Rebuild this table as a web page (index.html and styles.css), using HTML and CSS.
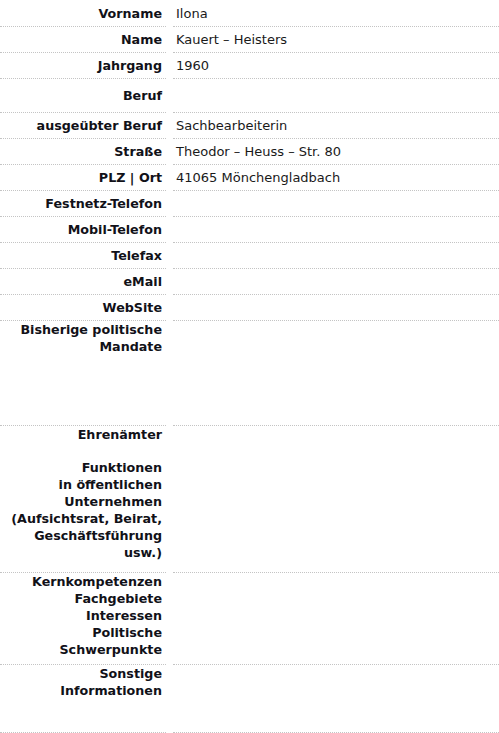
FILE: index.html
```html
<!DOCTYPE html>
<html lang="de">
<head>
<meta charset="utf-8">
<link rel="stylesheet" href="styles.css">
</head>
<body>
<div class="sheet">
  <div class="row r-first"><div class="lbl">Vorname</div><div class="val">Ilona</div></div>
  <div class="row"><div class="lbl">Name</div><div class="val">Kauert – Heisters</div></div>
  <div class="row"><div class="lbl">Jahrgang</div><div class="val">1960</div></div>
  <div class="row r-beruf"><div class="lbl">Beruf</div><div class="val"></div></div>
  <div class="row"><div class="lbl">ausgeübter Beruf</div><div class="val">Sachbearbeiterin</div></div>
  <div class="row"><div class="lbl">Straße</div><div class="val">Theodor – Heuss – Str. 80</div></div>
  <div class="row"><div class="lbl">PLZ | Ort</div><div class="val">41065 Mönchengladbach</div></div>
  <div class="row"><div class="lbl">Festnetz-Telefon</div><div class="val"></div></div>
  <div class="row"><div class="lbl">Mobil-Telefon</div><div class="val"></div></div>
  <div class="row"><div class="lbl">Telefax</div><div class="val"></div></div>
  <div class="row"><div class="lbl">eMail</div><div class="val"></div></div>
  <div class="row"><div class="lbl">WebSite</div><div class="val"></div></div>
  <div class="row tall r-mandate"><div class="lbl">Bisherige politische<br>Mandate</div><div class="val"></div></div>
  <div class="row tall r-ehren noline"><div class="lbl">Ehrenämter</div><div class="val"></div></div>
  <div class="row tall r-funk"><div class="lbl">Funktionen<br>in öffentlichen<br>Unternehmen<br>(Aufsichtsrat, Beirat,<br>Geschäftsführung<br>usw.)</div><div class="val"></div></div>
  <div class="row tall r-kern"><div class="lbl">Kernkompetenzen<br>Fachgebiete<br>Interessen<br>Politische<br>Schwerpunkte</div><div class="val"></div></div>
  <div class="row tall r-sonst"><div class="lbl">Sonstige<br>Informationen</div><div class="val"></div></div>
</div>
</body>
</html>
```
FILE: styles.css
```css
html, body {
  margin: 0;
  padding: 0;
  background: #ffffff;
}
body {
  font-family: "DejaVu Sans", Verdana, sans-serif;
  font-size: 13px;
  line-height: 17px;
  color: #1a1a1a;
}
.sheet {
  width: 499px;
}
.row {
  display: grid;
  grid-template-columns: 166px 1fr;
  column-gap: 7px;
  height: 26px;
}
.lbl, .val {
  border-bottom: 1px dotted #c4c4c4;
  display: flex;
  align-items: center;
  box-sizing: border-box;
}
.lbl {
  justify-content: flex-end;
  text-align: right;
  font-weight: bold;
  font-size: 12.7px;
  padding-right: 4px;
  color: #111118;
  white-space: nowrap;
}
.val {
  padding-left: 3px;
}
.r-first { height: 27px; }
.r-beruf { height: 34px; }
.tall .lbl, .tall .val { align-items: flex-start; }
.r-mandate { height: 105px; }
.r-ehren { height: 33px; }
.r-funk { height: 114px; }
.r-kern { height: 92px; }
.r-sonst { height: 68px; }
.noline .lbl, .noline .val { border-bottom: none; }
```
